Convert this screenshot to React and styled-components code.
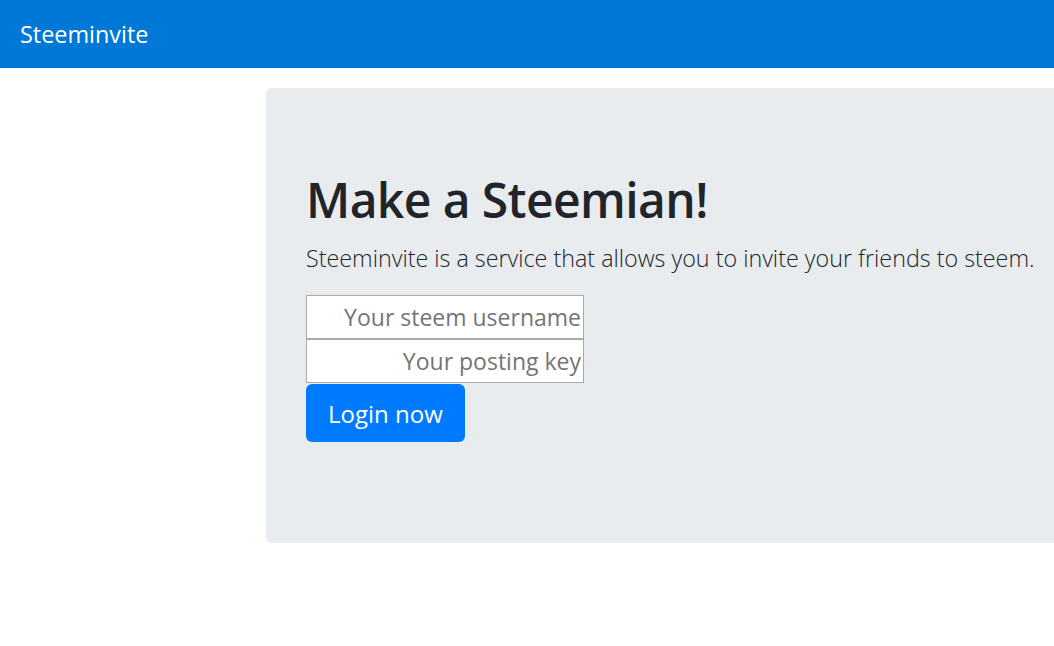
import React from "react";
import styled, { createGlobalStyle } from "styled-components";

const Global = createGlobalStyle`
  html, body { margin: 0; padding: 0; overflow: hidden; }
  body {
    font-family: "Open Sans", "Noto Sans", "Liberation Sans", sans-serif;
    color: #212529;
    background: #fff;
  }
  * { box-sizing: border-box; }
`;

const Navbar = styled.nav`
  height: 68px;
  background: #0078d7;
  display: flex;
  align-items: center;
  padding: 0 20px;
`;

const Brand = styled.a`
  color: #fff;
  font-size: 23.4px;
  text-decoration: none;
  padding-bottom: 1px;
`;

const Main = styled.main`
  padding: 20px 0 0 266px;
  overflow: hidden;
`;

const Jumbotron = styled.section`
  width: 1000px;
  background: #e9ecef;
  border-radius: 6px;
  padding: 82px 40px 101px;
`;

const Title = styled.h1`
  margin: 0 0 10px;
  font-size: 48px;
  font-weight: 600;
  line-height: 60px;
  letter-spacing: -0.6px;
`;

const Lead = styled.p`
  margin: 0 0 18px;
  font-size: 23.3px;
  font-weight: 300;
  line-height: 37px;
  white-space: nowrap;
`;

const Form = styled.form`
  display: flex;
  flex-direction: column;
  align-items: flex-start;
`;

const Input = styled.input`
  width: 278px;
  height: 44px;
  border: 1px solid #a9a9a9;
  background: #fff;
  padding: 0 2px;
  font-family: inherit;
  font-size: 23px;
  text-align: right;
  color: #212529;
  outline: none;
  &::placeholder { color: #757575; }
`;

const Button = styled.button`
  margin-top: 1px;
  height: 58px;
  padding: 0 22px;
  background: #007bff;
  color: #fff;
  border: none;
  border-radius: 6px;
  font-family: inherit;
  font-size: 24px;
  cursor: pointer;
`;

export default function App() {
  return (
    <>
      <Global />
      <Navbar>
        <Brand href="#">Steeminvite</Brand>
      </Navbar>
      <Main>
        <Jumbotron>
          <Title>Make a Steemian!</Title>
          <Lead>Steeminvite is a service that allows you to invite your friends to steem.</Lead>
          <Form onSubmit={(e) => e.preventDefault()}>
            <Input placeholder="Your steem username" />
            <Input type="password" placeholder="Your posting key" />
            <Button type="submit">Login now</Button>
          </Form>
        </Jumbotron>
      </Main>
    </>
  );
}
